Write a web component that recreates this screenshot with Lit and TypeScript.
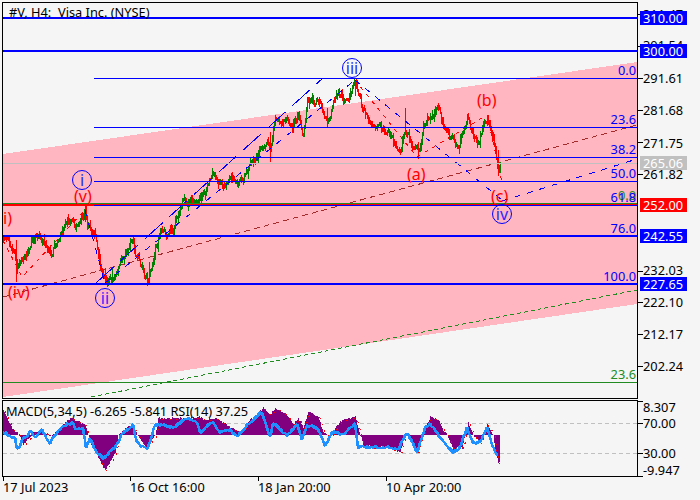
import { LitElement, html, svg, css } from "lit";
import { customElement } from "lit/decorators.js";

type P = [number, number];

const PRICE: P[] = [
  [3,240],[10,245],[17,262],[20,258],[28,250],[33,240],[40,237],[47,247],[50,253],[57,240],[63,228],[68,220],[75,223],[83,215],[85,210],
  [87,232],[90,228],[95,237],[98,257],[102,270],[105,280],[110,275],[115,277],[120,260],[125,253],[132,240],[135,253],[140,263],[148,280],
  [152,267],[155,248],[160,232],[167,235],[172,228],[183,200],[190,203],[203,193],[213,175],[220,185],[233,180],[238,187],[250,167],[258,155],
  [262,145],[267,140],[270,148],[273,127],[277,117],[280,127],[287,118],[292,130],[298,113],[303,133],[307,103],[312,98],[317,103],[322,113],
  [326,124],[330,117],[333,107],[338,88],[343,103],[350,93],[355,80],[358,98],[362,108],[367,120],[383,130],[393,140],[400,150],[403,133],
  [408,130],[413,147],[418,155],[423,127],[430,113],[437,110],[450,137],[458,150],[467,118],[477,147],[487,116],[493,140],[497,167],[499,172],[500,163],
];

const SPIKES: Record<number, [number, number]> = {
  16: [240, 282], 105: [268, 283], 112: [268, 283], 149: [262, 283], 270: [132, 162], 405: [108, 135], 327: [108, 128], 418: [142, 159],
  85: [205, 222], 355: [80, 96], 498: [150, 176],
};

const MACD: P[] = [
  [3,410],[8,420],[13,430],[17,433],[20,437],[23,445],[27,440],[33,433],[42,430],[50,437],[57,431],[65,422],[70,418],[75,420],[85,425],[88,435],
  [92,448],[97,455],[103,468],[105,470],[110,462],[115,452],[118,435],[125,428],[133,425],[137,435],[145,447],[150,442],[155,435],[158,418],[170,418],
  [190,418],[200,417],[205,420],[215,418],[230,427],[240,433],[250,420],[263,408],[270,415],[275,408],[287,415],[293,425],[298,418],[303,428],[308,412],
  [318,417],[323,432],[330,437],[337,425],[342,420],[355,417],[360,435],[363,445],[372,447],[387,447],[400,452],[405,435],[407,433],[413,445],[417,452],
  [422,435],[430,417],[438,420],[443,430],[447,435],[453,450],[460,445],[462,448],[465,432],[468,423],[472,432],[475,438],[480,443],[483,433],[487,424],
  [493,435],[495,450],[498,463],
];

const RSI: P[] = [
  [3,432],[8,435],[15,438],[17,448],[20,447],[23,438],[27,437],[30,430],[35,437],[42,430],[50,443],[57,433],[63,425],[72,423],[75,428],[83,428],[86,448],
  [90,438],[95,450],[100,455],[103,458],[110,452],[117,445],[123,432],[130,428],[133,425],[137,443],[143,447],[148,448],[155,425],[163,425],[173,428],
  [187,418],[197,422],[200,433],[212,422],[220,432],[230,430],[237,437],[247,425],[262,412],[270,437],[273,423],[287,435],[297,425],[302,440],[307,425],
  [317,428],[325,445],[333,432],[343,435],[355,423],[358,447],[370,447],[390,447],[398,450],[405,435],[408,433],[417,452],[425,428],[430,423],[443,442],
  [453,452],[460,447],[467,428],[473,443],[480,442],[487,428],[493,447],[498,455],
];

function interp(pts: P[], x: number): number {
  for (let i = 1; i < pts.length; i++) {
    if (x <= pts[i][0]) {
      const [x0, y0] = pts[i - 1];
      const [x1, y1] = pts[i];
      return y0 + ((y1 - y0) * (x - x0)) / (x1 - x0 || 1);
    }
  }
  return pts[pts.length - 1][1];
}

function rng(seed: number) {
  return () => {
    seed = (seed + 0x6d2b79f5) | 0;
    let t = Math.imul(seed ^ (seed >>> 15), 1 | seed);
    t = (t + Math.imul(t ^ (t >>> 7), 61 | t)) ^ t;
    return ((t ^ (t >>> 14)) >>> 0) / 4294967296;
  };
}

function candles() {
  const r = rng(7);
  let up = "";
  let down = "";
  let prev = interp(PRICE, 3);
  let drift = 0;
  for (let x = 3; x <= 500; x++) {
    drift = drift * 0.6 + (r() - 0.5) * 7;
    const c = interp(PRICE, x) + drift;
    const o = prev;
    let hi = Math.min(o, c) - r() * r() * 6 - 1;
    let lo = Math.max(o, c) + r() * r() * 6 + 1;
    if (SPIKES[x]) [hi, lo] = SPIKES[x];
    const seg = `M${x}.5 ${Math.round(hi)}V${Math.round(lo)}`;
    if (c < o) up += seg;
    else down += seg;
    prev = c;
  }
  return { up, down };
}

function histogram() {
  const r = rng(21);
  let d = "";
  for (let x = 3; x <= 499; x++) {
    const y = Math.round(interp(MACD, x) + (r() - 0.5) * 2);
    d += `M${x}.5 435V${y}`;
  }
  return d;
}

function rsiPoints() {
  const r = rng(33);
  const out: string[] = [];
  for (let x = 3; x <= 498; x++) {
    out.push(`${x},${Math.round(interp(RSI, x) + (r() - 0.5) * 3)}`);
  }
  return out.join(" ");
}

function poly(pts: P[], dx = 0, dy = 0) {
  return pts.map(([x, y]) => `${x + dx},${y + dy}`).join(" ");
}

const HLINES = [
  { y: 78, x: 94, c: "blue thin" },
  { y: 127, x: 94, c: "blue thin" },
  { y: 157, x: 94, c: "blue thin" },
  { y: 181, x: 94, c: "blue thin" },
  { y: 163, x: 3, c: "gray thin" },
  { y: 382, x: 3, c: "green thin" },
  { y: 18, x: 3, c: "blue thick" },
  { y: 51, x: 3, c: "blue thick" },
  { y: 236, x: 3, c: "blue thick" },
  { y: 284, x: 3, c: "blue thick" },
  { y: 203.5, x: 3, c: "green thin" },
  { y: 205, x: 3, c: "red thick" },
  { y: 205.5, x: 94, c: "blue thin" },
];

const FIBS: [string, number, string][] = [
  ["0.0", 75, "fib-blue"],
  ["23.6", 124, "fib-blue"],
  ["38.2", 154, "fib-blue"],
  ["50.0", 178, "fib-blue"],
  ["0.0", 200, "fib-green"],
  ["61.8", 202, "fib-blue"],
  ["76.0", 233, "fib-blue"],
  ["100.0", 281, "fib-blue"],
  ["23.6", 379, "fib-green"],
];

const AXIS: [string, number, number][] = [
  ["311.47", 14, 19],
  ["301.54", 46, 50],
  ["291.61", 78, 83],
  ["281.68", 110, 115],
  ["271.75", 142, 148],
  ["261.82", 174, 179],
  ["232.03", 271, 275],
  ["222.10", 302, 307],
  ["212.17", 334, 339],
  ["202.24", 366, 371],
  ["8.307", 401, 412],
  ["70.00", 423, 428],
  ["30.00", 453, 458],
  ["-9.947", 476, 475],
];

const TAGS: [string, number, string][] = [
  ["310.00", 11, "tag-blue"],
  ["300.00", 44, "tag-blue"],
  ["265.06", 156, "tag-gray"],
  ["252.00", 198, "tag-red"],
  ["242.55", 229, "tag-blue"],
  ["227.65", 277, "tag-blue"],
];

const CIRCLES: [string, number, number][] = [
  ["i", 82, 180],
  ["ii", 105, 298],
  ["iii", 352, 68],
  ["iv", 502, 214],
];

const WAVES: [string, number, number][] = [
  ["i)", 3, 224],
  ["(v)", 74, 202],
  ["(iv)", 8, 298],
  ["(a)", 407, 180],
  ["(b)", 477, 106],
  ["(c)", 491, 202],
];

const TIMES: [string, number][] = [
  ["17 Jul 2023", 3],
  ["16 Oct 16:00", 130],
  ["18 Jan 20:00", 258],
  ["10 Apr 20:00", 386],
];

@customElement("app-root")
export class AppRoot extends LitElement {
  static styles = css`
    :host { display: block; width: 700px; height: 500px; background: #f5f5f5; overflow: hidden; }
    .canvas { display: block; width: 700px; height: 500px; background: #f5f5f5; }
    .crisp { shape-rendering: crispEdges; }
    .channel { fill: #ffb6c1; }
    .frame { fill: none; stroke: #000; stroke-width: 1; }
    line, polyline, path { fill: none; }
    .thin { stroke-width: 1; }
    .thick { stroke-width: 2; }
    .blue { stroke: #0000ff; }
    .gray { stroke: #c0c0c0; }
    .green { stroke: #228b22; }
    .red { stroke: #ff0000; }
    .tick { stroke: #000; stroke-width: 1; }
    .candle-up { stroke: #008000; stroke-width: 1; }
    .candle-down { stroke: #ff0000; stroke-width: 1; }
    .d-long { stroke: #0000ff; stroke-dasharray: 24 9; stroke-width: 1; }
    .d-short { stroke: #0000ff; stroke-dasharray: 6 7; stroke-width: 1; }
    .d-red { stroke: #ff0000; stroke-dasharray: 4 5; stroke-width: 1; }
    .d-brown { stroke: #a52a2a; stroke-dasharray: 6 4; stroke-width: 1; }
    .d-green { stroke: #228b22; stroke-dasharray: 4 3; stroke-width: 1; }
    .level { stroke: #c0c0c0; stroke-dasharray: 4 3; stroke-width: 1; }
    .hist { stroke: #800080; stroke-width: 1; }
    .signal { stroke: #ff0000; stroke-dasharray: 2 5; stroke-width: 1; }
    .rsi { stroke: #1e90ff; stroke-width: 2.6; stroke-linejoin: bevel; }
    text { font-family: "Noto Sans", "Liberation Sans", sans-serif; font-size: 12.8px; fill: #000; }
    .fib-blue { fill: #0000ff; text-anchor: end; }
    .fib-green { fill: #228b22; text-anchor: end; }
    .tag-blue { fill: #0000ff; }
    .tag-gray { fill: #c0c0c0; }
    .tag-red { fill: #ff0000; }
    .tag-text { fill: #ffffff; }
    .circle-mark { fill: none; stroke: #0000ff; stroke-width: 1; }
    .wave-blue { fill: #2a2aff; font-size: 16px; text-anchor: middle; }
    .wave-red { fill: #ff0000; font-size: 16px; }
  `;

  render() {
    const c = candles();
    return html`<svg class="canvas" viewBox="0 0 700 500" xmlns="http://www.w3.org/2000/svg">
      <defs>
        <clipPath id="main"><rect x="3" y="3" width="634" height="395"></rect></clipPath>
      </defs>
      <g clip-path="url(#main)">
        <polygon class="channel crisp" points="3,154 637,62 637,304 3,397"></polygon>
        <line class="d-green crisp" x1="91" y1="397" x2="637" y2="290"></line>
        <line class="d-brown crisp" x1="3" y1="297" x2="637" y2="125"></line>
        <polyline class="d-red crisp" points="3,240 22,277 85,210"></polyline>
        <polyline class="d-red crisp" points="355,80 417,157 487,115 502,182"></polyline>
        <path class="candle-up crisp" d=${c.up}></path>
        <path class="candle-down crisp" d=${c.down}></path>
        <line class="d-long crisp" x1="96" y1="283" x2="323" y2="78"></line>
        <line class="d-short crisp" x1="105" y1="283" x2="355" y2="80"></line>
        <line class="d-short crisp" x1="85" y1="210" x2="105" y2="283"></line>
        <line class="d-short crisp" x1="355" y1="80" x2="502" y2="200"></line>
        <line class="d-short crisp" x1="502" y1="201" x2="637" y2="159"></line>
        ${HLINES.map((l) => svg`<line class="${l.c} crisp" x1=${l.x} x2="637" y1=${l.y} y2=${l.y}></line>`)}
        ${FIBS.map(([t, y, k]) => svg`<text class=${k} x="636" y=${y}>${t}</text>`)}
        ${CIRCLES.map(([t, x, y]) => svg`
          <circle class="circle-mark" cx=${x} cy=${y} r="9.5"></circle>
          <text class="wave-blue" x=${x} y=${y + 6}>${t}</text>`)}
        ${WAVES.map(([t, x, y]) => svg`<text class="wave-red" x=${x} y=${y}>${t}</text>`)}
      </g>

      <line class="level crisp" x1="3" x2="637" y1="423" y2="423"></line>
      <line class="level crisp" x1="3" x2="637" y1="453" y2="453"></line>
      <path class="hist crisp" d=${histogram()}></path>
      <polyline class="signal crisp" points=${poly(MACD, 2, 1)}></polyline>
      <polyline class="rsi crisp" points=${rsiPoints()}></polyline>
      <text x="6" y="416">MACD(5,34,5) -6.265 -5.841 RSI(14) 37.25</text>

      <rect class="frame crisp" x="2.5" y="2.5" width="635" height="396"></rect>
      <rect class="frame crisp" x="2.5" y="400.5" width="635" height="76"></rect>

      ${AXIS.map(([t, tick, base]) => svg`
        <line class="tick crisp" x1="638" x2="643" y1=${tick + 0.5} y2=${tick + 0.5}></line>
        <text x="643" y=${base}>${t}</text>`)}
      ${TAGS.map(([t, y, k]) => svg`
        <rect class="${k} crisp" x="640" y=${y} width="47" height="14"></rect>
        <text class="tag-text" x="643" y=${y + 12}>${t}</text>`)}
      ${TIMES.map(([t, x]) => svg`
        <line class="tick crisp" x1=${x + 0.5} x2=${x + 0.5} y1="477" y2="481"></line>
        <text x=${x} y="492">${t}</text>`)}
      <text x="9" y="16.5">#V, H4:\u00a0\u00a0Visa Inc. (NYSE)</text>
    </svg>`;
  }
}
